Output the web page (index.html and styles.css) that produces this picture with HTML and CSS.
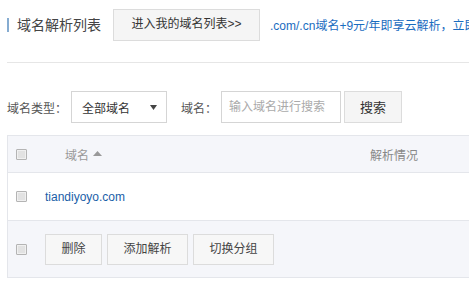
FILE: index.html
```html
<!DOCTYPE html>
<html lang="zh-CN">
<head>
<meta charset="utf-8">
<title>域名解析列表</title>
<link rel="stylesheet" href="styles.css">
</head>
<body>
<div class="page">
  <div class="topbar">
    <span class="accent"></span>
    <h1 class="title">域名解析列表</h1>
    <button class="btn btn-top">进入我的域名列表&gt;&gt;</button>
    <a class="promo" href="#">.com/.cn域名+9元/年即享云解析，立即购买</a>
  </div>
  <div class="divider"></div>
  <div class="filters">
    <span class="label">域名类型：</span>
    <div class="select">
      <span>全部域名</span>
      <svg class="caret" width="7" height="5" viewBox="0 0 7 5"><path d="M0 0H7L3.5 5Z" fill="#444"/></svg>
    </div>
    <span class="label label-name">域名：</span>
    <div class="input">输入域名进行搜索</div>
    <button class="btn btn-search">搜索</button>
  </div>
  <div class="table">
    <div class="row head">
      <div class="cell cell-check"><span class="checkbox"></span></div>
      <div class="cell cell-name">域名<svg class="sort" width="9" height="5" viewBox="0 0 9 5"><path d="M0 5H9L4.5 0Z" fill="#999"/></svg></div>
      <div class="cell cell-status">解析情况</div>
    </div>
    <div class="row item">
      <div class="cell cell-check"><span class="checkbox"></span></div>
      <div class="cell cell-domain"><a class="domain" href="#">tiandiyoyo.com</a></div>
      <div class="cell cell-status"></div>
    </div>
    <div class="foot">
      <div class="cell cell-check"><span class="checkbox"></span></div>
      <div class="actions">
        <button class="btn btn-act">删除</button>
        <button class="btn btn-act">添加解析</button>
        <button class="btn btn-act">切换分组</button>
      </div>
    </div>
  </div>
</div>
</body>
</html>
```

FILE: styles.css
```css
html, body {
  margin: 0;
  padding: 0;
  background: #fff;
  overflow: hidden;
}

body {
  font-family: "Liberation Sans", "Noto Sans CJK SC", sans-serif;
  font-size: 12px;
  color: #333;
}

.page {
  padding-left: 7px;
  width: 640px;
}

.topbar {
  display: flex;
  align-items: center;
  padding-top: 9px;
  height: 31px;
  white-space: nowrap;
}

.accent {
  width: 2px;
  height: 14px;
  background: #86acd1;
}

.title {
  margin: 0 0 0 8px;
  font-size: 14px;
  font-weight: normal;
  color: #444;
  line-height: 20px;
}

.btn {
  font-family: inherit;
  font-size: 12px;
  color: #333;
  background: #f5f5f5;
  border: 1px solid #dcdcdc;
  border-radius: 0;
  padding: 0 15.5px;
  height: 31px;
  line-height: 29px;
  margin: 0;
  cursor: pointer;
}

.btn-top {
  margin-left: 12px;
  padding: 0 17.5px;
  height: 32px;
}

.promo {
  margin-left: 10px;
  color: #1a6cbf;
  text-decoration: none;
  font-size: 12px;
}

.divider {
  margin-top: 22px;
  height: 1px;
  background: #e6e6e6;
}

.filters {
  display: flex;
  align-items: center;
  margin-top: 28px;
  height: 32px;
}

.label {
  color: #555;
  margin-right: 4px;
}

.label-name {
  margin-left: 14px;
}

.select {
  box-sizing: border-box;
  width: 96px;
  height: 32px;
  border: 1px solid #d5d5d5;
  display: flex;
  align-items: center;
  justify-content: space-between;
  padding: 0 9px 0 10px;
  color: #333;
}

.caret {
  display: block;
}

.input {
  box-sizing: border-box;
  width: 120px;
  height: 32px;
  border: 1px solid #d5d5d5;
  padding-left: 7px;
  line-height: 30px;
  color: #aaa;
}

.btn-search {
  margin-left: 3px;
  height: 32px;
  padding: 0 15px;
  font-size: 13px;
}

.table {
  margin-top: 12px;
  border: 1px solid #e4e6eb;
}

.row {
  display: grid;
  grid-template-columns: 37px 325px 1fr;
  align-items: center;
}

.head {
  height: 36px;
  background: #f5f6fa;
  border-bottom: 1px solid #e4e6eb;
  color: #999;
}

.item {
  height: 47px;
  border-bottom: 1px solid #e4e6eb;
}

.cell-check {
  padding-left: 8px;
  display: flex;
  align-items: center;
}

.checkbox {
  box-sizing: border-box;
  width: 11px;
  height: 11px;
  border: 1px solid #b4b4b4;
  background: #e2e2e2;
  box-shadow: inset 0 0 0 1px #f0f0f0;
  border-radius: 1px;
}

.cell-name {
  padding-left: 20px;
  display: flex;
  align-items: center;
}

.sort {
  margin-left: 4px;
  margin-top: -2px;
}

.cell-status {
  color: #888;
}

.domain {
  color: #1a5ea8;
  text-decoration: none;
}

.foot {
  display: flex;
  align-items: center;
  height: 56px;
  background: #f5f6fa;
}

.foot .cell-check {
  width: 29px;
}

.actions {
  display: flex;
  gap: 5px;
}

.btn-act {
  background: #f7f7f7;
  border-color: #dcdcdc;
  color: #444;
}
```
